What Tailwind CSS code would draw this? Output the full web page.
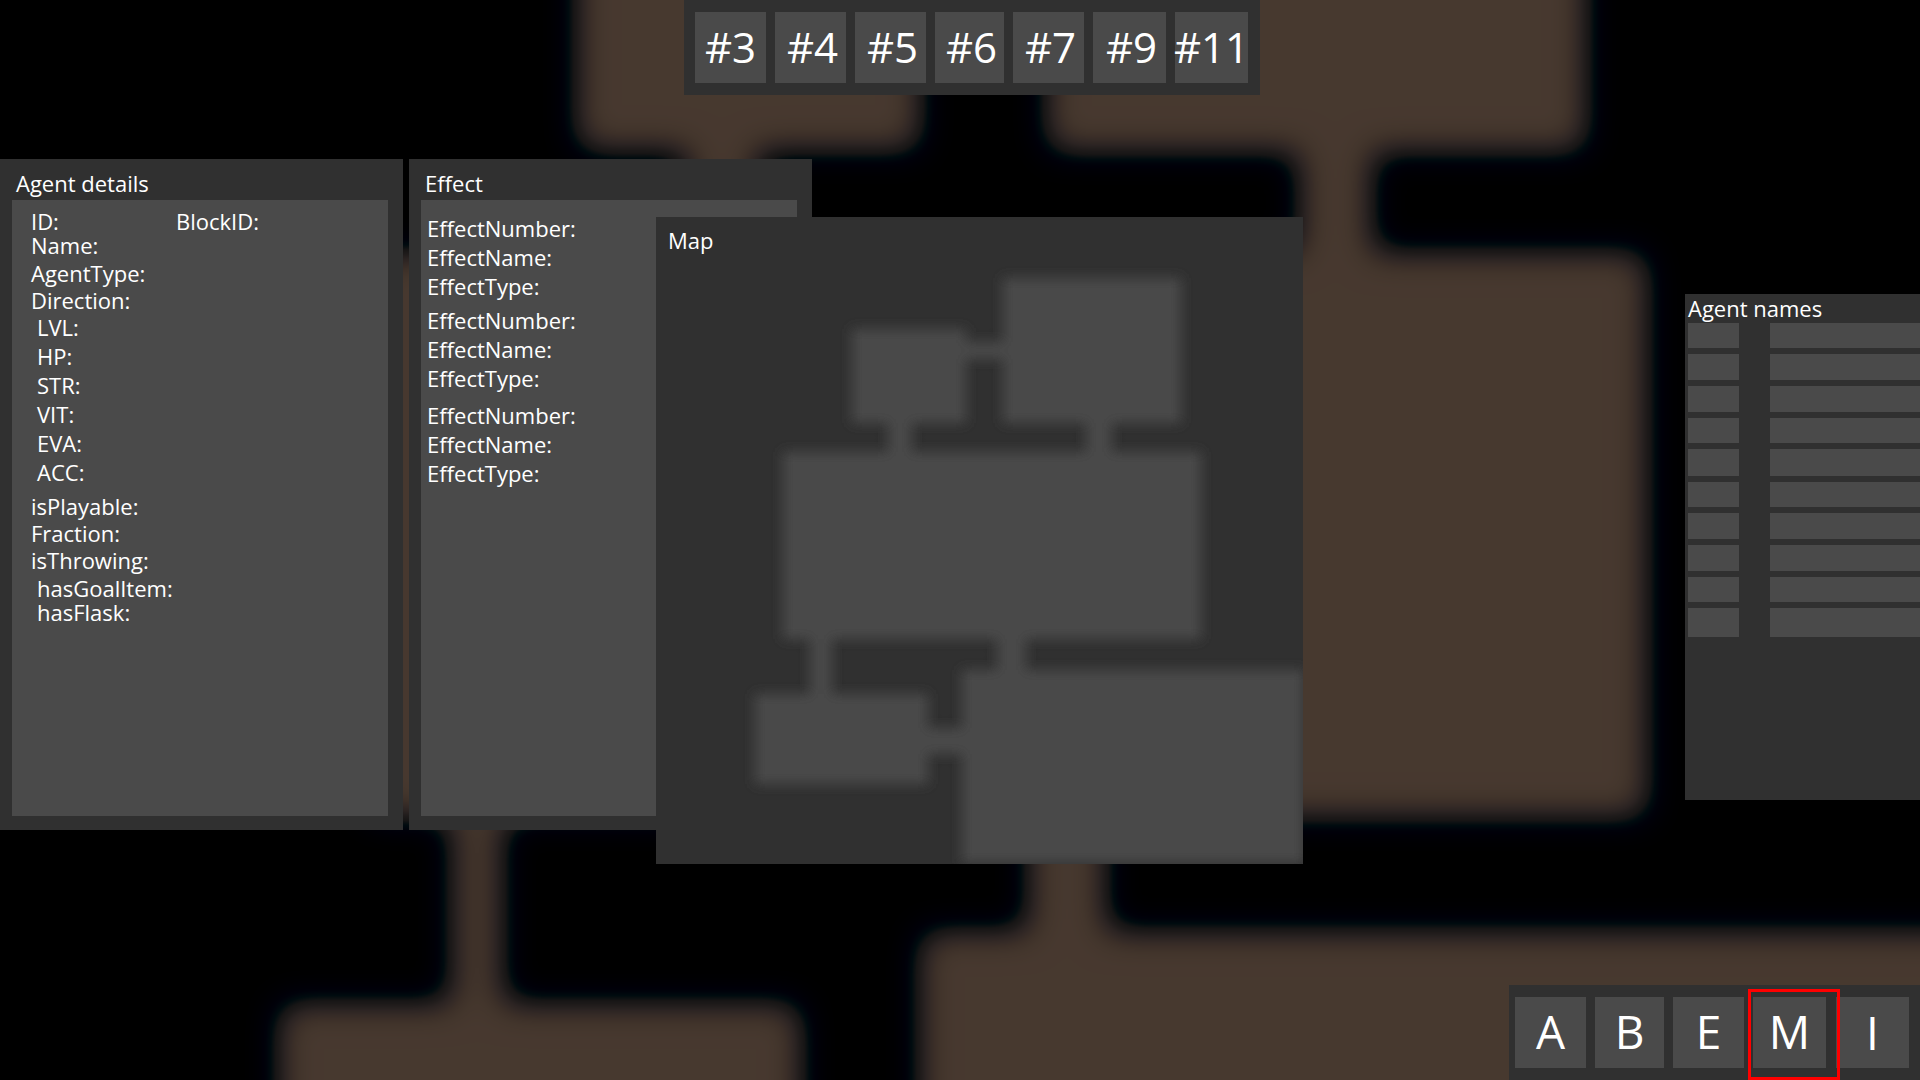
<!DOCTYPE html>
<html lang="en">
<head>
<meta charset="utf-8">
<meta name="viewport" content="width=device-width, initial-scale=1">
<title>Agent inspector</title>
<script src="https://cdn.jsdelivr.net/npm/@tailwindcss/browser@4"></script>
</head>
<body class="bg-black font-['Open_Sans',sans-serif] text-[22px] leading-[28px] text-white">
<div class="relative isolate flex min-h-screen flex-col overflow-hidden">

  <!-- Dungeon floor behind the panels -->
  <svg class="absolute inset-0 -z-10 h-full w-full" viewBox="0 0 1920 1080" preserveAspectRatio="xMidYMid slice" aria-hidden="true">
    <defs>
      <filter id="fog" filterUnits="userSpaceOnUse" x="-100" y="-100" width="2120" height="1280" color-interpolation-filters="sRGB">
        <feGaussianBlur stdDeviation="18"/>
        <feComponentTransfer>
          <feFuncR type="table" tableValues="0 0 0 0 .09 .125 .17 .205 .24 .265 .282"/>
          <feFuncG type="table" tableValues="0 0 .005 .045 .085 .11 .14 .165 .19 .212 .224"/>
          <feFuncB type="table" tableValues="0 .02 .04 .06 .085 .108 .135 .15 .16 .175 .188"/>
        </feComponentTransfer>
      </filter>
    </defs>
    <g filter="url(#fog)">
      <rect x="-100" y="-100" width="2120" height="1280" fill="#000"/>
      <g fill="#fff">
        <rect x="578" y="-100" width="341" height="249"/>
        <rect x="690" y="140" width="64" height="130"/>
        <rect x="1048" y="-100" width="537" height="250"/>
        <rect x="1301" y="140" width="69" height="130"/>
        <rect x="1000" y="254" width="646" height="562"/>
        <rect x="370" y="254" width="430" height="562"/>
        <rect x="453" y="800" width="48" height="220"/>
        <rect x="280" y="1005" width="520" height="200"/>
        <rect x="1030" y="800" width="74" height="150"/>
        <rect x="921" y="933" width="1200" height="300"/>
      </g>
    </g>
  </svg>

  <header class="flex justify-center pl-6">
    <nav aria-label="Agents" class="flex gap-[9px] bg-[#303030] py-3 pr-3 pl-[11px] text-[42px]">
      <button type="button" class="flex h-[71px] w-[71px] items-center justify-center bg-[#4a4a4a] pb-[2px]">#3</button>
      <button type="button" class="flex h-[71px] w-[71px] items-center justify-center bg-[#4a4a4a] pb-[2px] pl-1">#4</button>
      <button type="button" class="flex h-[71px] w-[71px] items-center justify-center bg-[#4a4a4a] pb-[2px] pl-1">#5</button>
      <button type="button" class="flex h-[71px] w-[69px] items-center justify-center bg-[#4a4a4a] pb-[2px] pl-1">#6</button>
      <button type="button" class="flex h-[71px] w-[71px] items-center justify-center bg-[#4a4a4a] pb-[2px] pl-1">#7</button>
      <button type="button" class="flex h-[71px] w-[73px] items-center justify-center bg-[#4a4a4a] pb-[2px] pl-1">#9</button>
      <button type="button" class="flex h-[71px] w-[73px] items-center justify-center bg-[#4a4a4a] pb-[2px]">#11</button>
    </nav>
  </header>

  <main class="relative flex flex-1 items-start gap-[6px] pt-16">

    <section class="flex min-h-[671px] w-[403px] shrink-0 flex-col bg-[#303030] pr-[15px] pb-[14px] pl-3">
      <h2 class="pt-[10px] pb-[3px] pl-1">Agent details</h2>
      <div class="flex-1 bg-[#4a4a4a] pt-[9px] pl-[19px]">
        <div class="leading-[24px]">
          <div class="flex"><p class="w-[145px]">ID:</p><p>BlockID:</p></div>
          <p>Name:</p>
        </div>
        <div class="mt-[3px] leading-[27px]">
          <p>AgentType:</p>
          <p>Direction:</p>
          <p class="pl-[6px]">LVL:</p>
        </div>
        <div class="mt-px pl-[6px] leading-[29px]">
          <p>HP:</p>
          <p>STR:</p>
          <p>VIT:</p>
          <p>EVA:</p>
          <p>ACC:</p>
        </div>
        <div class="mt-[6px] leading-[27px]">
          <p>isPlayable:</p>
          <p>Fraction:</p>
          <p>isThrowing:</p>
        </div>
        <div class="mt-[2px] pl-[6px] leading-[24px]">
          <p>hasGoalItem:</p>
          <p>hasFlask:</p>
        </div>
      </div>
    </section>

    <section class="flex min-h-[671px] w-[403px] shrink-0 flex-col bg-[#303030] pr-[15px] pb-[14px] pl-3">
      <h2 class="pt-[10px] pb-[3px] pl-1">Effect</h2>
      <div class="flex-1 bg-[#4a4a4a] pt-[14px] pl-[6px] leading-[29px]">
        <div>
          <p>EffectNumber:</p>
          <p>EffectName:</p>
          <p>EffectType:</p>
        </div>
        <div class="mt-[5px]">
          <p>EffectNumber:</p>
          <p>EffectName:</p>
          <p>EffectType:</p>
        </div>
        <div class="mt-2">
          <p>EffectNumber:</p>
          <p>EffectName:</p>
          <p>EffectType:</p>
        </div>
      </div>
    </section>

    <aside class="mt-[135px] ml-auto flex min-h-[506px] w-[235px] shrink-0 flex-col bg-[#303030] pl-[3px]">
      <h2 class="pb-px">Agent names</h2>
      <div class="grid grid-cols-[51px_1fr] grid-rows-[25px_26px_26px_25px_27px_25px_26px_26px_25px_29px] gap-x-[31px] gap-y-[6px]">
        <div class="bg-[#4a4a4a]"></div><div class="bg-[#4a4a4a]"></div>
        <div class="bg-[#4a4a4a]"></div><div class="bg-[#4a4a4a]"></div>
        <div class="bg-[#4a4a4a]"></div><div class="bg-[#4a4a4a]"></div>
        <div class="bg-[#4a4a4a]"></div><div class="bg-[#4a4a4a]"></div>
        <div class="bg-[#4a4a4a]"></div><div class="bg-[#4a4a4a]"></div>
        <div class="bg-[#4a4a4a]"></div><div class="bg-[#4a4a4a]"></div>
        <div class="bg-[#4a4a4a]"></div><div class="bg-[#4a4a4a]"></div>
        <div class="bg-[#4a4a4a]"></div><div class="bg-[#4a4a4a]"></div>
        <div class="bg-[#4a4a4a]"></div><div class="bg-[#4a4a4a]"></div>
        <div class="bg-[#4a4a4a]"></div><div class="bg-[#4a4a4a]"></div>
      </div>
    </aside>

    <!-- Floating map window -->
    <section class="absolute top-[122px] left-[656px] size-[647px] overflow-hidden bg-[#303030]">
      <h2 class="relative z-10 pt-[9px] pl-3">Map</h2>
      <svg class="absolute inset-0 size-full" viewBox="0 0 647 647" aria-hidden="true">
        <defs>
          <filter id="soft" filterUnits="userSpaceOnUse" x="0" y="0" width="680" height="680">
            <feGaussianBlur stdDeviation="6"/>
          </filter>
        </defs>
        <g fill="#4a4a4a" filter="url(#soft)">
          <rect x="196" y="112" width="114" height="94"/>
          <rect x="347" y="61" width="178" height="145"/>
          <rect x="300" y="125" width="57" height="17"/>
          <rect x="232" y="196" width="24" height="50"/>
          <rect x="430" y="196" width="26" height="50"/>
          <rect x="127" y="235" width="418" height="187"/>
          <rect x="154" y="412" width="22" height="75"/>
          <rect x="341" y="412" width="29" height="51"/>
          <rect x="99" y="477" width="173" height="90"/>
          <rect x="262" y="511" width="53" height="26"/>
          <rect x="306" y="453" width="342" height="193"/>
        </g>
      </svg>
    </section>
  </main>

  <footer class="flex justify-end">
    <nav aria-label="Windows" class="flex gap-[9px] bg-[#303030] py-3 pr-[11px] pl-[6px] text-[46px]">
      <button type="button" class="flex h-[71px] w-[71px] items-center justify-center bg-[#4a4a4a] pb-1">A</button>
      <button type="button" class="flex h-[71px] w-[69px] items-center justify-center bg-[#4a4a4a] pb-1">B</button>
      <button type="button" class="flex h-[71px] w-[71px] items-center justify-center bg-[#4a4a4a] pb-1">E</button>
      <button type="button" aria-pressed="true" class="relative z-10 flex h-[71px] w-[73px] items-center justify-center bg-[#4a4a4a] pb-1">M<span class="absolute -top-2 -left-[5px] h-[91px] w-[92px] border-3 border-[#ff0000]"></span></button>
      <button type="button" class="ml-px flex h-[71px] w-[73px] items-center justify-center bg-[#4a4a4a] pb-px">I</button>
    </nav>
  </footer>
</div>
</body>
</html>
